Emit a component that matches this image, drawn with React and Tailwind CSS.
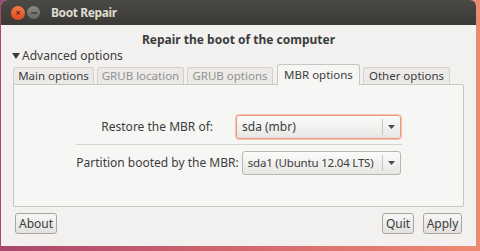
import { useState } from "react";

const font = { fontFamily: '"Noto Sans", "DejaVu Sans", sans-serif' };

const Combo = ({ value, focused, width, small }) => (
  <div
    className={`flex items-center h-[24px] rounded-[3px] border bg-gradient-to-b from-[#fbfbfa] to-[#e8e7e5] ${
      focused ? "border-[#f0967a] shadow-[0_0_0_1px_#f6c4b2]" : "border-[#b9b6b1]"
    } ${width}`}
  >
    <span
      className={`flex-1 pl-[5px] text-[#3c3c3c] whitespace-nowrap ${
        small ? "text-[11.5px] tracking-[-0.2px]" : "text-[12px]"
      }`}
    >
      {value}
    </span>
    <span className="h-[16px] w-px bg-[#c9c6c2]" />
    <span className="w-[17px] flex justify-center">
      <svg width="7" height="4" viewBox="0 0 7 4">
        <path d="M0 0h7L3.5 4z" fill="#4c4c4c" />
      </svg>
    </span>
  </div>
);

const Button = ({ children, className = "" }) => (
  <button
    className={`h-[21px] px-[2px] rounded-[3px] border border-[#a9a6a1] bg-gradient-to-b from-[#f7f7f6] to-[#e2e1df] text-[12px] text-[#3c3c3c] leading-none ${className}`}
  >
    {children}
  </button>
);

const tabs = [
  { label: "Main options", w: "w-[81px]", dim: false },
  { label: "GRUB location", w: "w-[87px]", dim: true },
  { label: "GRUB options", w: "w-[86px]", dim: true },
  { label: "MBR options", w: "w-[83px] ml-[1px]", dim: false },
  { label: "Other options", w: "w-[87px]", dim: false },
];

export default function App() {
  const [active] = useState(3);
  return (
    <div
      className="w-[480px] h-[251px] bg-gradient-to-r from-[#a8486c] via-[#d4676e] to-[#ef8a72] flex flex-col"
      style={font}
    >
      <div className="ml-[1px] mr-[4px] h-[246px] flex flex-col rounded-t-[6px] overflow-hidden bg-[#f2f1f0]">
        {/* title bar */}
        <div className="h-[25px] shrink-0 bg-gradient-to-b from-[#4a4944] to-[#3b3a36] flex items-center pl-[10px]">
          <div className="w-[14px] h-[14px] rounded-full bg-gradient-to-b from-[#f47a4a] to-[#df4a1e] flex items-center justify-center text-[9px] font-bold text-[#5a2010] leading-none">
            ×
          </div>
          <div className="ml-[2px] w-[13px] h-[13px] rounded-full bg-gradient-to-b from-[#8a8984] to-[#6a6964] flex items-center justify-center">
            <span className="w-[6px] h-[2px] bg-[#4a4944]" />
          </div>
          <span className="ml-[11px] text-[12px] tracking-[-0.4px] font-bold text-[#dfdbd2]">Boot Repair</span>
        </div>

        {/* heading */}
        <div className="pt-[6px] leading-[18px] text-center text-[12px] font-bold text-[#3c3c3c]">
          Repair the boot of the computer
        </div>

        <div className="h-[14px] flex items-center pl-[11px] text-[12px] text-[#3c3c3c]">
          <svg width="8" height="6" viewBox="0 0 8 6" className="mr-[2px]">
            <path d="M0 0h8L4 6z" fill="#3c3c3c" />
          </svg>
          Advanced options
        </div>

        {/* tabs */}
        <div className="mt-[1px] px-[12px] flex items-end gap-[3px] h-[20px]">
          {tabs.map((t, i) => (
            <div
              key={t.label}
              className={`${t.w} flex items-center justify-center rounded-t-[3px] border border-b-0 text-[11.5px] whitespace-nowrap ${
                i === active
                  ? "h-[21px] bg-[#f6f6f5] border-[#c9c6c2] text-[#3c3c3c] relative z-10 -mb-px"
                  : "h-[17px] bg-[#ebeae8] border-[#d3d0cc] " + (t.dim ? "text-[#939190]" : "text-[#3c3c3c]")
              }`}
            >
              {t.label}
            </div>
          ))}
        </div>

        {/* panel */}
        <div className="mx-[12px] h-[123px] shrink-0 border border-[#c9c6c2] rounded-b-[2px] rounded-tr-[2px] bg-[#f6f6f5] flex flex-col items-center">
          <div className="mt-[30px] flex items-center">
            <span className="w-[160px] text-right pr-[23px] text-[12px] text-[#3c3c3c]">Restore the MBR of:</span>
            <Combo value="sda (mbr)" focused width="w-[165px]" />
          </div>
          <div className="mt-[5px] ml-[1px] w-[326px] h-px bg-[#d6d3cf]" />
          <div className="mt-[6px] flex items-center">
            <span className="pr-[3px] text-[12px] text-[#3c3c3c]">Partition booted by the MBR:</span>
            <Combo value="sda1 (Ubuntu 12.04 LTS)" small width="w-[159px]" />
          </div>
        </div>

        {/* buttons */}
        <div className="mt-[6px] px-[14px] flex items-center">
          <Button className="w-[42px]">About</Button>
          <div className="flex-1" />
          <Button className="w-[32px]">Quit</Button>
          <Button className="ml-[9px] w-[39px]">Apply</Button>
        </div>
      </div>
    </div>
  );
}
